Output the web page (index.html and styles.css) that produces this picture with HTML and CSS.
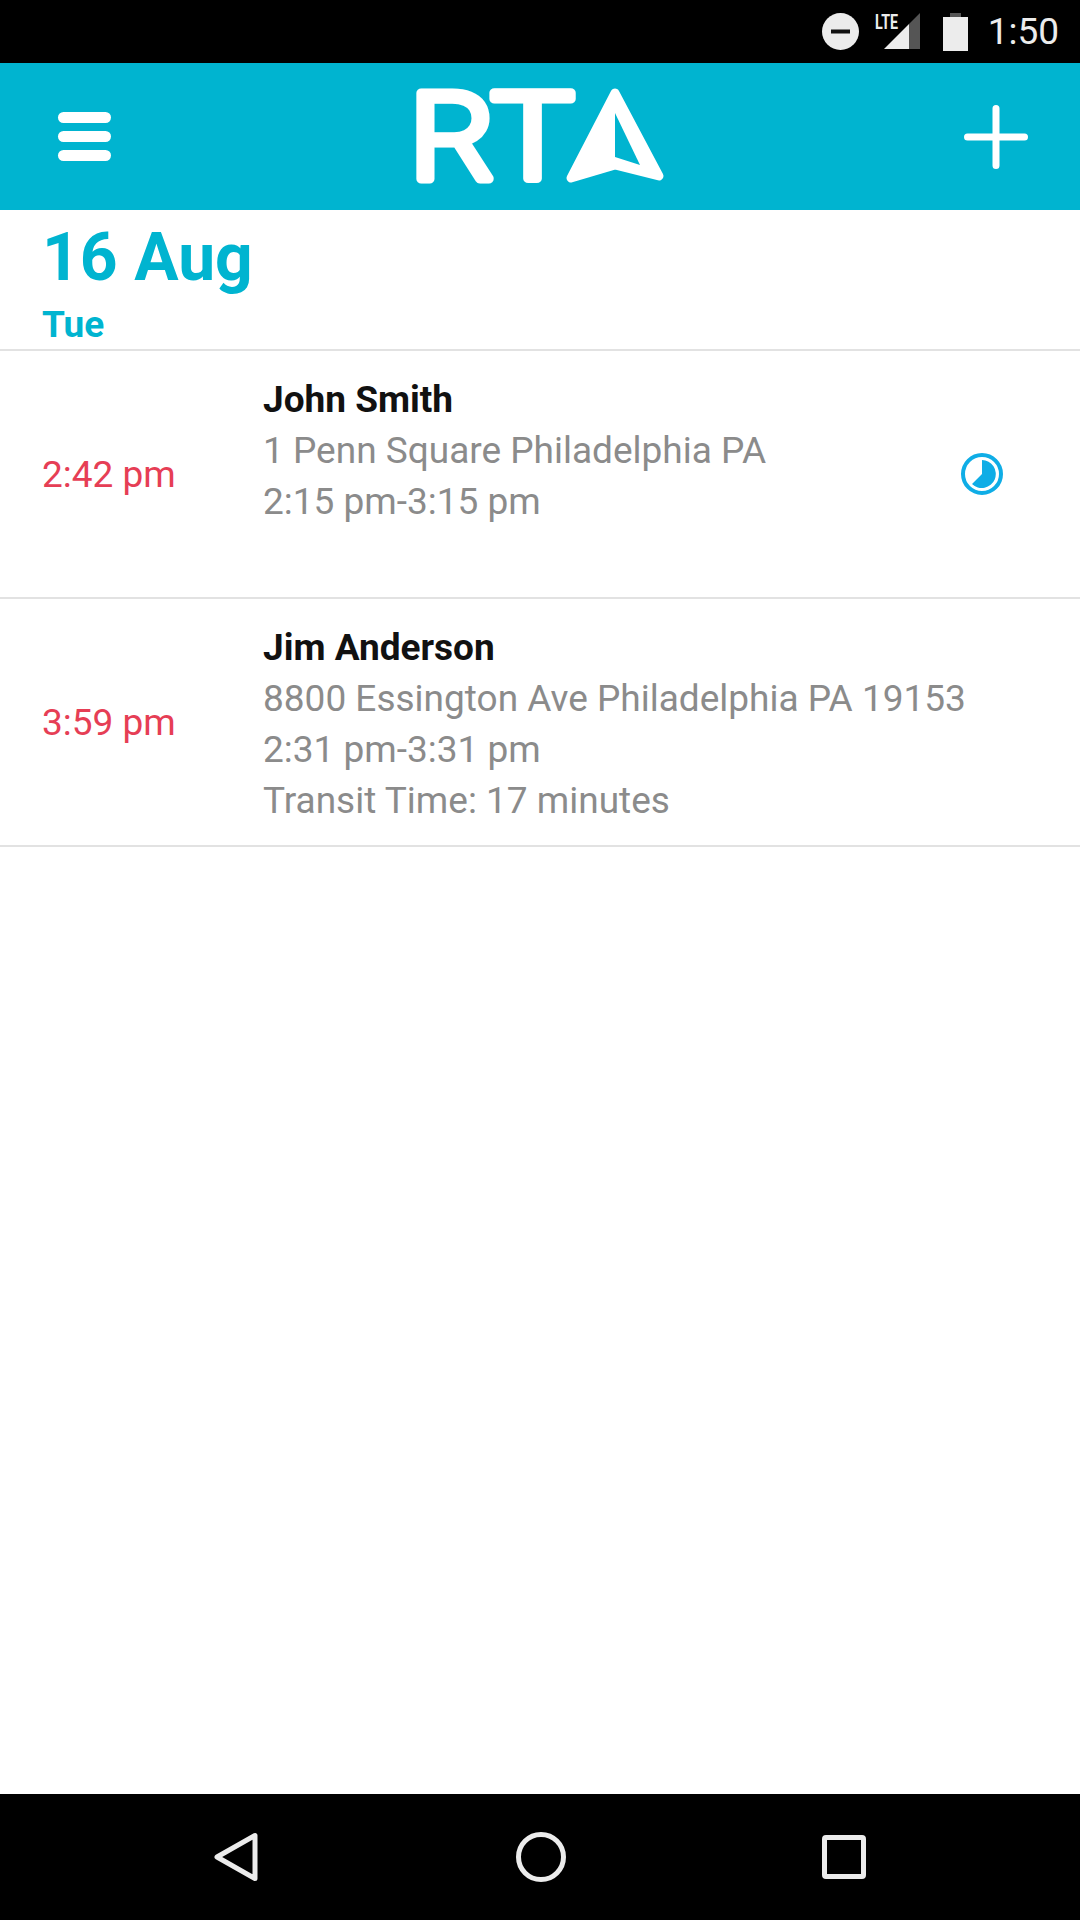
FILE: index.html
```html
<!DOCTYPE html>
<html lang="en">
<head>
    <meta charset="UTF-8">
    <meta name="viewport" content="width=device-width, initial-scale=1.0">
    <title>RTA Schedule</title>
    <link rel="stylesheet" href="styles.css">
</head>
<body>
    <div class="status-bar">
        <svg class="icon-dnd" width="37" height="37" viewBox="0 0 37 37">
            <circle cx="18.5" cy="18.5" r="18.5" fill="#ececec"/>
            <rect x="9" y="16.5" width="19" height="4" fill="#111"/>
        </svg>
        <svg class="icon-signal" width="46" height="63" viewBox="0 0 46 63">
            <text x="0" y="29" class="lte-text" textLength="23" lengthAdjust="spacingAndGlyphs">LTE</text>
            <path d="M9 49 L34 24 V49 Z" fill="#ececec"/>
            <path d="M34 24 L45 13 V49 H34 Z" fill="#555"/>
        </svg>
        <svg class="icon-battery" width="25" height="38" viewBox="0 0 25 38">
            <path d="M7 0 H18 V4 H7 Z" fill="#555"/>
            <rect x="0" y="4" width="25" height="34" fill="#ececec"/>
        </svg>
        <span class="clock">1:50</span>
    </div>

    <header class="app-bar">
        <div class="menu-icon">
            <span></span>
            <span></span>
            <span></span>
        </div>
        <svg class="logo" width="260" height="147" viewBox="0 0 260 147" role="img" aria-label="RTA">
            <text x="1.5" y="115.5" class="logo-text" textLength="85" lengthAdjust="spacingAndGlyphs">R</text>
            <text x="83" y="115.5" class="logo-text" textLength="83" lengthAdjust="spacingAndGlyphs">T</text>
            <path class="logo-arrow" d="M207 30 L251 113 L207 102 L163 115 Z"/>
            <path class="logo-cut" d="M207 50 V94 L232 102 Z"/>
        </svg>
        <svg class="plus-icon" width="64" height="64" viewBox="0 0 64 64">
            <path d="M32 3.5 V60.5 M3.5 32 H60.5" stroke="#fff" stroke-width="7" stroke-linecap="round"/>
        </svg>
    </header>

    <main class="content">
        <div class="date-block">
            <div class="date">16 Aug</div>
            <div class="day">Tue</div>
        </div>

        <div class="row">
            <div class="eta">2:42 pm</div>
            <div class="details">
                <div class="name">John Smith</div>
                <div>1 Penn Square Philadelphia PA</div>
                <div>2:15 pm-3:15 pm</div>
            </div>
            <svg class="status-icon" width="44" height="44" viewBox="0 0 44 44">
                <circle cx="22" cy="22" r="19" fill="none" stroke="#0fade6" stroke-width="4"/>
                <path d="M22 8 A14 14 0 1 1 12 32 L22 22 Z" fill="#0fade6"/>
            </svg>
        </div>

        <div class="row">
            <div class="eta">3:59 pm</div>
            <div class="details">
                <div class="name">Jim Anderson</div>
                <div>8800 Essington Ave Philadelphia PA 19153</div>
                <div>2:31 pm-3:31 pm</div>
                <div>Transit Time: 17 minutes</div>
            </div>
        </div>
    </main>

    <nav class="nav-bar">
        <svg width="45" height="52" viewBox="0 0 45 52">
            <path d="M41 4.5 V47.5 L3 26 Z" fill="none" stroke="#ececec" stroke-width="5" stroke-linejoin="round"/>
        </svg>
        <svg width="50" height="50" viewBox="0 0 50 50">
            <circle cx="25" cy="25" r="22.5" fill="none" stroke="#ececec" stroke-width="5"/>
        </svg>
        <svg width="44" height="44" viewBox="0 0 44 44">
            <rect x="2.5" y="2.5" width="39" height="39" rx="1.5" fill="none" stroke="#ececec" stroke-width="5"/>
        </svg>
    </nav>
</body>
</html>
```

FILE: styles.css
```css
* {
    box-sizing: border-box;
}

html, body {
    height: 100%;
}

body {
    margin: 0;
    display: flex;
    flex-direction: column;
    font-family: Roboto, "Liberation Sans", sans-serif;
    background-color: #ffffff;
}

.status-bar {
    height: 63px;
    flex: none;
    display: flex;
    align-items: center;
    padding-right: 21px;
    justify-content: flex-end;
    background-color: #000000;
}

.icon-dnd {
    margin-right: 16px;
}

.icon-signal {
    margin-right: 22px;
}

.icon-battery {
    margin-right: 20px;
}

.lte-text {
    font-family: Roboto, sans-serif;
    font-weight: 700;
    font-size: 21px;
    fill: #ececec;
}

.clock {
    font-size: 37px;
    line-height: 63px;
    color: #ececec;
}

.app-bar {
    height: 147px;
    flex: none;
    display: flex;
    align-items: center;
    justify-content: space-between;
    padding: 0 52px 0 58px;
    background-color: #00b4d0;
}

.menu-icon {
    width: 53px;
    display: flex;
    flex-direction: column;
    gap: 8px;
}

.menu-icon span {
    height: 11px;
    border-radius: 6px;
    background-color: #ffffff;
}

.logo-text {
    font-family: Roboto, sans-serif;
    font-weight: 300;
    font-size: 121px;
    fill: #ffffff;
    stroke: #ffffff;
    stroke-width: 9px;
    stroke-linejoin: round;
}

.logo-arrow {
    fill: #ffffff;
    stroke: #ffffff;
    stroke-width: 9px;
    stroke-linejoin: round;
}

.logo-cut {
    fill: #00b4d0;
}

.content {
    flex: 1;
}

.date-block {
    height: 141px;
    padding: 11px 0 0 42px;
    border-bottom: 2px solid #e2e2e2;
    color: #00b4d0;
    font-weight: 700;
}

.date {
    font-size: 66px;
    line-height: 74px;
}

.day {
    font-size: 37px;
    line-height: 42px;
    margin-top: 9px;
}

.row {
    height: 248px;
    display: flex;
    align-items: center;
    padding-right: 76px;
    border-bottom: 2px solid #e2e2e2;
}

.eta {
    width: 263px;
    flex: none;
    padding-left: 42px;
    font-size: 37px;
    color: #e63e55;
}

.details {
    flex: 1;
    align-self: flex-start;
    padding-top: 23px;
    font-size: 37px;
    line-height: 51px;
    color: #8b8b8b;
}

.name {
    font-weight: 700;
    color: #111111;
}

.nav-bar {
    height: 126px;
    flex: none;
    display: flex;
    align-items: center;
    justify-content: space-between;
    padding: 0 214px;
    background-color: #000000;
}
```
